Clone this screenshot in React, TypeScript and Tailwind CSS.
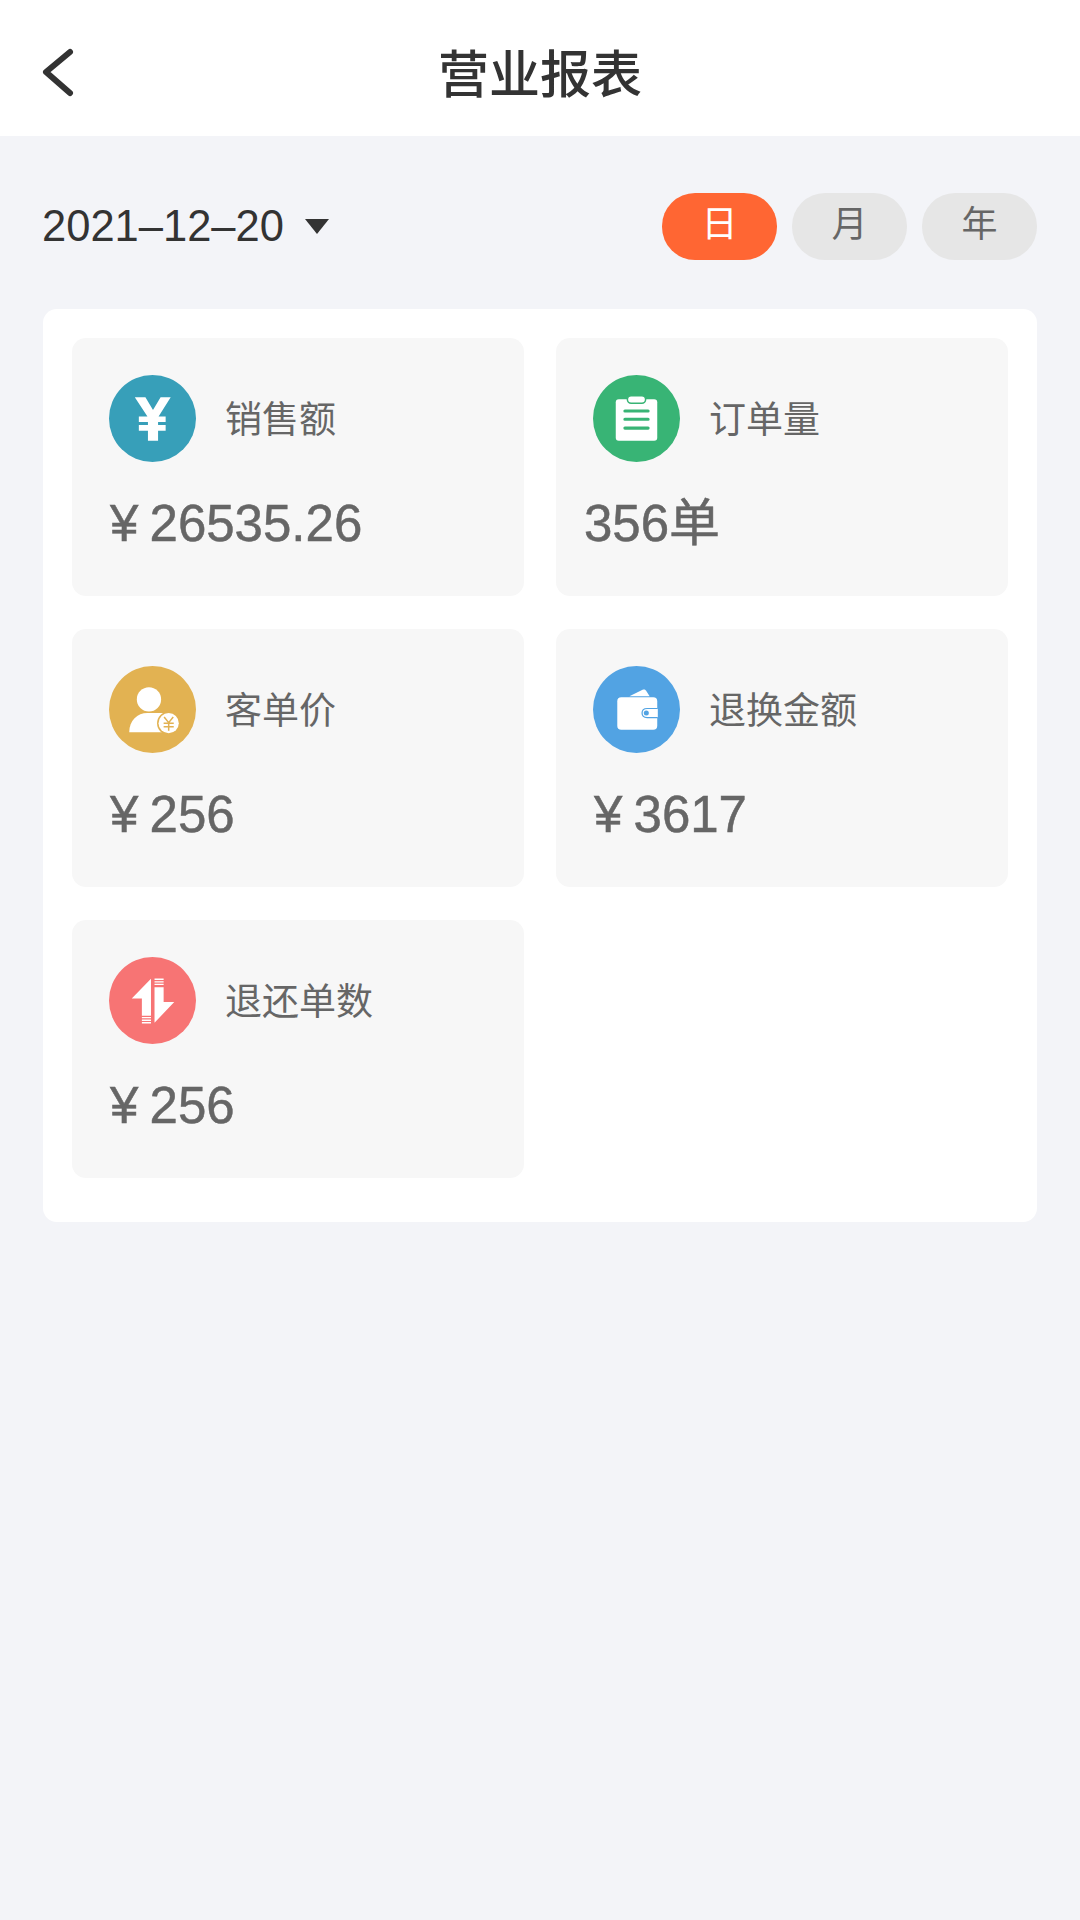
import React from 'react';

const cjk = "font-['Liberation_Sans','Noto_Sans_CJK_SC',sans-serif]";

const YenIcon = () => (
  <svg width="87" height="87" viewBox="0 0 86 86">
    <circle cx="43" cy="43" r="43" fill="#379fb9" />
    <path d="M25.500 22H36L43.500 34.500L51 22H61L49 41H56V46.500H48.500V49.500H56V55H48.500V65H38.500V55H29.500V49.500H38.500V46.500H29.500V41H38Z" fill="#fff" />
  </svg>
);

const ClipboardIcon = () => (
  <svg width="87" height="87" viewBox="0 0 86 86">
    <circle cx="43" cy="43" r="43" fill="#38b475" />
    <rect x="22.500" y="24" width="41" height="41" rx="3" fill="#fff" />
    <rect x="34" y="20.500" width="18" height="7.500" rx="3.700" fill="#fff" stroke="#38b475" strokeWidth="1.500" />
    <path d="M31.500 35.500H54.500M31.500 43.700H54.500M31.500 52.500H54.500" stroke="#38b475" strokeWidth="3" strokeLinecap="round" />
  </svg>
);

const PersonIcon = () => (
  <svg width="87" height="87" viewBox="0 0 86 86">
    <circle cx="43" cy="43" r="43" fill="#e2b252" />
    <circle cx="39.500" cy="33" r="12" fill="#fff" />
    <path d="M20 65.500C20 54 28 46.500 38 46.500H54V65.500Z" fill="#fff" />
    <circle cx="59" cy="56.500" r="11.500" fill="#e2b252" />
    <circle cx="59" cy="56.500" r="10" fill="#fff" />
    <path d="M54.500 50.500L59 56L63.500 50.500M54 56.500H64M54 60H64M59 56V64" fill="none" stroke="#e2b252" strokeWidth="1.500" />
  </svg>
);

const WalletIcon = () => (
  <svg width="87" height="87" viewBox="0 0 86 86">
    <circle cx="43" cy="43" r="43" fill="#52a3e3" />
    <path d="M36 30L49 23.500C50.500 22.800 51.500 23 52.500 24.500L56 30Z" fill="#fff" />
    <rect x="24" y="31" width="39.500" height="32" rx="4" fill="#fff" />
    <path d="M64 42H53.500C50 42 48.500 44 48.500 46.500C48.500 49 50 51 53.500 51H64" fill="#fff" stroke="#52a3e3" strokeWidth="1.200" />
    <circle cx="52.700" cy="46.500" r="2.500" fill="#52a3e3" />
  </svg>
);

const SwapIcon = () => (
  <svg width="87" height="87" viewBox="0 0 86 86">
    <circle cx="43" cy="43" r="43" fill="#f77474" />
    <path d="M41.500 21.500V58H32.500V41H22.500Z" fill="#fff" />
    <path d="M32.500 60H41.500M32.500 62.500H41.500M32.500 65H41.500" stroke="#fff" strokeWidth="1.300" />
    <path d="M45 65V30H54V44.500H64.500Z" fill="#fff" />
    <path d="M45 22H54M45 24.500H54M45 27H54" stroke="#fff" strokeWidth="1.300" />
  </svg>
);

const stats = [
  { label: '销售额', value: '¥ 26535.26', icon: <YenIcon />, shift: false },
  { label: '订单量', value: '356单', icon: <ClipboardIcon />, shift: true },
  { label: '客单价', value: '¥ 256', icon: <PersonIcon />, shift: false },
  { label: '退换金额', value: '¥ 3617', icon: <WalletIcon />, shift: false },
  { label: '退还单数', value: '¥ 256', icon: <SwapIcon />, shift: false },
];

export default function App() {
  return (
    <div className={`min-h-[1920px] w-[1080px] bg-[#f3f4f8] ${cjk}`}>
      <header className="relative flex h-[136px] items-center justify-center bg-white pt-[14px]">
        <svg className="absolute left-[41px] top-[47px]" width="34" height="50" viewBox="0 0 34 50">
          <path d="M29 5L5 25L29 46" fill="none" stroke="#333" strokeWidth="6" strokeLinecap="round" strokeLinejoin="round" />
        </svg>
        <h1 className="text-[51px] font-medium leading-none text-[#333]">营业报表</h1>
      </header>

      <div className="flex items-center justify-between pb-[49px] pl-[42px] pr-[43px] pt-[57px]">
        <div className="flex items-center">
          <span className="text-[43.5px] leading-none text-[#333]">2021–12–20</span>
          <span className="ml-[21px] h-0 w-0 border-x-[12px] border-t-[15px] border-x-transparent border-t-[#333]" />
        </div>
        <div className="flex gap-[15px]">
          <div className="flex h-[67px] w-[115px] items-center justify-center rounded-[33px] bg-[#ff6633] pb-[3px] text-[36px] text-white">日</div>
          <div className="flex h-[67px] w-[115px] items-center justify-center rounded-[33px] bg-[#e6e6e6] pb-[3px] text-[36px] text-[#666]">月</div>
          <div className="flex h-[67px] w-[115px] items-center justify-center rounded-[33px] bg-[#e6e6e6] pb-[3px] text-[36px] text-[#666]">年</div>
        </div>
      </div>

      <main className="mx-[43px] grid grid-cols-2 gap-x-[32px] gap-y-[33px] rounded-[14px] bg-white px-[29px] pb-[44px] pt-[29px]">
        {stats.map((item) => (
          <div key={item.label} className="h-[258px] rounded-[14px] bg-[#f7f7f7] pl-[37px] pt-[37px]">
            <div className="flex items-center gap-[29px]">
              {item.icon}
              <span className="pt-[4px] text-[37px] leading-none text-[#666]">{item.label}</span>
            </div>
            <div className={`mt-[33px] text-[51px] leading-[58px] text-[#666] [-webkit-text-stroke:0.5px_#666] [word-spacing:-3px] ${item.shift ? 'ml-[-9px]' : 'ml-[1px]'}`}>
              {item.value}
            </div>
          </div>
        ))}
      </main>
    </div>
  );
}
